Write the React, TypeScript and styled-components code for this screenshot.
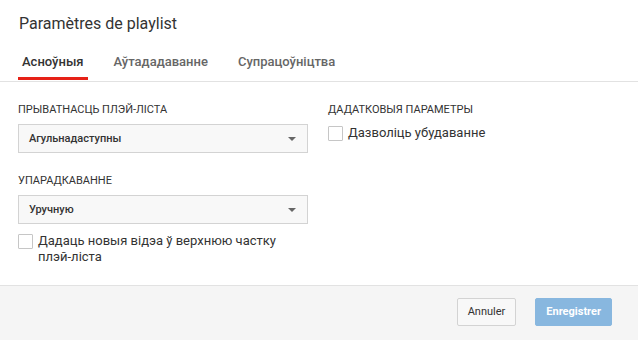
import React from "react";
import styled, { createGlobalStyle } from "styled-components";

const Global = createGlobalStyle`
  html, body { margin: 0; padding: 0; background: #fff; }
  body { font-family: Roboto, "Noto Sans", Arial, sans-serif; color: #333; }
  * { box-sizing: border-box; }
`;

const Dialog = styled.div`
  width: 638px;
  height: 340px;
  display: flex;
  flex-direction: column;
  background: #fff;
`;

const Title = styled.h1`
  margin: 0;
  padding: 14px 19px 0;
  height: 42px;
  font-size: 16px;
  font-weight: 400;
  color: #333;
  line-height: 20px;
`;

const TabBar = styled.div`
  display: flex;
  gap: 22px;
  padding: 0 18px;
  height: 40px;
  border-bottom: 1px solid #e2e2e2;
  align-items: stretch;
`;

const Tab = styled.div<{ $active?: boolean }>`
  display: flex;
  align-items: center;
  padding: 3px 4px 0;
  font-size: 13px;
  font-weight: 500;
  color: ${(p) => (p.$active ? "#333" : "#666")};
  border-bottom: 3px solid ${(p) => (p.$active ? "#e62117" : "transparent")};
  margin-bottom: 1px;
`;

const Body = styled.div`
  flex: 1;
  display: grid;
  grid-template-columns: 290px 290px;
  column-gap: 20px;
  padding: 21px 18px 0;
  align-content: start;
`;

const Column = styled.div`
  display: flex;
  flex-direction: column;
`;

const Label = styled.div<{ $gap?: number }>`
  font-size: 11px;
  color: #333;
  line-height: 14px;
  margin-bottom: ${(p) => p.$gap ?? 7}px;
`;

const Select = styled.div<{ $after?: number }>`
  height: 29px;
  border: 1px solid #d3d3d3;
  background: #f8f8f8;
  display: flex;
  align-items: center;
  justify-content: space-between;
  padding: 0 10px;
  font-size: 11px;
  font-weight: 500;
  color: #333;
  margin-bottom: ${(p) => p.$after ?? 21}px;
`;

const Arrow = styled.span`
  width: 0;
  height: 0;
  border-left: 4px solid transparent;
  border-right: 4px solid transparent;
  border-top: 4px solid #666;
  margin-right: 1px;
`;

const CheckRow = styled.label`
  display: flex;
  align-items: flex-start;
  gap: 5px;
  font-size: 13px;
  line-height: 16px;
  color: #333;
`;

const Box = styled.span`
  flex: none;
  width: 15px;
  height: 15px;
  border: 1px solid #c6c6c6;
  background: #fff;
  border-radius: 1px;
  margin-top: 1px;
`;

const Footer = styled.div`
  height: 55px;
  border-top: 1px solid #e2e2e2;
  background: #f5f5f5;
  display: flex;
  align-items: center;
  justify-content: flex-end;
  gap: 19px;
  padding: 0 26px 3px 0;
`;

const Button = styled.button<{ $primary?: boolean }>`
  height: 28px;
  padding: 0 10px;
  border-radius: 2px;
  font-family: Roboto, Arial, sans-serif;
  font-size: 11px;
  font-weight: ${(p) => (p.$primary ? 700 : 400)};
  color: ${(p) => (p.$primary ? "#fff" : "#333")};
  background: ${(p) => (p.$primary ? "#88b7df" : "#f8f8f8")};
  border: 1px solid ${(p) => (p.$primary ? "#88b7df" : "#d3d3d3")};
  cursor: pointer;
`;

export default function App() {
  return (
    <>
      <Global />
      <Dialog>
        <Title>Paramètres de playlist</Title>
        <TabBar>
          <Tab $active>Асноўныя</Tab>
          <Tab>Аўтададаванне</Tab>
          <Tab>Супрацоўніцтва</Tab>
        </TabBar>
        <Body>
          <Column>
            <Label>ПРЫВАТНАСЦЬ ПЛЭЙ-ЛІСТА</Label>
            <Select>
              Агульнадаступны
              <Arrow />
            </Select>
            <Label>УПАРАДКАВАННЕ</Label>
            <Select $after={9}>
              Уручную
              <Arrow />
            </Select>
            <CheckRow>
              <Box />
              <span>Дадаць новыя відэа ў верхнюю частку плэй-ліста</span>
            </CheckRow>
          </Column>
          <Column>
            <Label $gap={8}>ДАДАТКОВЫЯ ПАРАМЕТРЫ</Label>
            <CheckRow>
              <Box />
              <span>Дазволіць убудаванне</span>
            </CheckRow>
          </Column>
        </Body>
        <Footer>
          <Button>Annuler</Button>
          <Button $primary>Enregistrer</Button>
        </Footer>
      </Dialog>
    </>
  );
}
